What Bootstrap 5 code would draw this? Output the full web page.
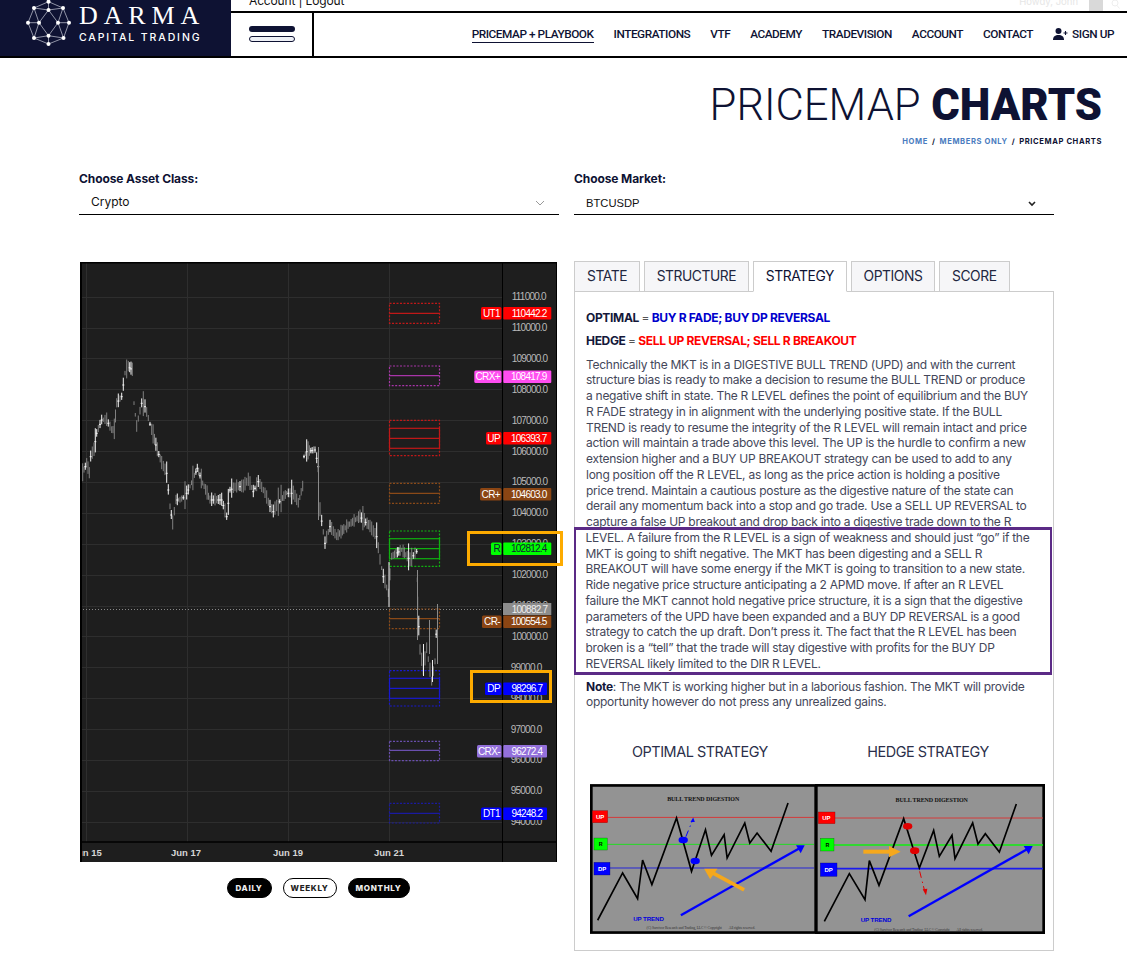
<!DOCTYPE html>
<html lang="en">
<head>
<meta charset="UTF-8">
<meta name="viewport" content="width=device-width, initial-scale=1.0">
<title>Pricemap Charts</title>
<link href="https://cdn.jsdelivr.net/npm/bootstrap@5.3.0/dist/css/bootstrap.min.css" rel="stylesheet">
<style>
body { font-family: Inter, "Liberation Sans", sans-serif; color: #0e1233; background: #fff; }

/* header */
.site-head { height: 58px; border-bottom: 2px solid #000; }
.logo-cell { width: 231px; background: #0e1233; color: #fff; overflow: hidden; padding-left: 25px; }
.logo-icon { margin: -6px 6px 0 0; }
.logo-word { font-family: "Liberation Serif", serif; font-size: 26px; line-height: 1; letter-spacing: 5.9px; margin-top: -10px; }
.logo-sub { font-size: 10.5px; line-height: 1; letter-spacing: 1.9px; margin-top: 4px; font-weight: 500; }
.head-top { height: 13px; border-bottom: 2px solid #000; overflow: hidden; padding: 0 7px 0 18px; }
.acct-link { font-size: 12px; line-height: 1; margin-top: -5px; color: #111; letter-spacing: -.15px; }
.howdy { font-size: 9.5px; line-height: 1; margin-top: -3px; color: #e6e6e6; }
.avatar-box { width: 14px; height: 12px; background: #d9d9d9; margin-left: 3px; }
.burger-cell { width: 83px; border-right: 2px solid #000; padding: 13px 0 0 18px; }
.burger-a { width: 46px; height: 6px; background: #0e1233; border-radius: 3px; }
.burger-b { width: 46px; height: 6px; background: #eef0f6; border: 1px solid #0e1233; border-radius: 3px; margin-top: 4px; }
.main-menu { gap: 20px; padding: 0 13px 2px 0; font-family: Roboto, "Liberation Sans", sans-serif; font-size: 11.8px; letter-spacing: -.45px; }
.main-menu .nav-link { padding: 0; color: #0e1233; font-weight: 500; line-height: 14px; }
.main-menu .nav-link.current { border-bottom: 1px solid #0e1233; padding-bottom: 1px; margin-top: 2px; }

/* title */
.page-head { padding: 23px 25px 0 0; text-align: right; }
.page-title { font-family: Roboto, sans-serif; font-size: 43.5px; line-height: 50px; font-weight: 300; margin: 0; color: #0e1233; }
.page-title b { font-weight: 900; }
.crumbs { font-size: 7.6px; font-weight: 700; letter-spacing: .6px; margin: 5px 0 0; line-height: 12px; --bs-breadcrumb-divider: "/"; --bs-breadcrumb-item-padding-x: 4px; --bs-breadcrumb-divider-color: #0e1233; --bs-breadcrumb-margin-bottom: 0; }
.crumbs a { color: #4a7cc0; text-decoration: none; }
.crumbs .active { color: #0e1233; }

/* pickers */
.page-body { padding: 0 73px 0 79px; width: 1127px; }
.pick-col { width: 480px; }
.pick-label { font-size: 12px; font-weight: 700; line-height: 16px; margin: 0 0 4px; display: block; letter-spacing: -.1px; }
.pick-select { border: 0; border-bottom: 1.5px solid #000; border-radius: 0; font-size: 12px; height: 24px; padding: 0 0 1px 12px; color: #111; background-position: right 14px center; background-size: 10px 8px; box-shadow: none; }
.pick-select.thin-arrow { background-image: url("data:image/svg+xml,%3csvg xmlns='http://www.w3.org/2000/svg' viewBox='0 0 10 8'%3e%3cpath fill='none' stroke='%23999' d='M1 2l4 4 4-4'/%3e%3c/svg%3e"); }
.pick-select.bold-arrow { font-family: "Liberation Sans", sans-serif; font-size: 11.2px; padding-top: 2px; padding-bottom: 0; background-position: right 17px center; background-image: url("data:image/svg+xml,%3csvg xmlns='http://www.w3.org/2000/svg' viewBox='0 0 10 8'%3e%3cpath fill='none' stroke='%23222' stroke-width='1.6' d='M2 3l3 3 3-3'/%3e%3c/svg%3e"); }

/* chart */
.chart-wrap { width: 477px; margin: 0 0 0 1px; position: relative; }
.chart-wrap svg { display: block; }
.hilite { position: absolute; border: 3.5px solid #fdab00; }
.hilite-r { left: 387px; top: 269px; width: 96px; height: 35px; }
.hilite-dp { left: 390px; top: 408px; width: 82px; height: 33px; }
.range-pills { gap: 11px; margin-top: 16px; padding-right: 2px; }
.range-btn { --bs-btn-padding-x: 0; --bs-btn-padding-y: 0; font-size: 8px; font-weight: 800; letter-spacing: .7px; height: 20px; line-height: 17px; border: 1px solid #000; background: #000; color: #eee; }
.range-btn:hover { background: #000; color: #eee; }
.range-btn.off { background: #fff; color: #222; }
.w-daily { width: 45px; } .w-weekly { width: 54px; } .w-monthly { width: 62px; }

/* tabs + strategy panel */
.info-col { margin-top: -1px; }
.info-tabs { --bs-nav-tabs-border-color: #ccc; --bs-nav-tabs-border-radius: 0; --bs-nav-tabs-link-active-border-color: #ccc #ccc #fff; --bs-nav-tabs-link-active-color: #0e1233; gap: 3.6px; font-size: 13.8px; line-height: 18px; letter-spacing: -.42px; }
.info-tabs .nav-link { padding: 5px 12px 6px; margin-bottom: -1px; color: #22263f; background: #f6f6f8; border-color: #ccc #ccc #ccc; }
.info-tabs .nav-link.active { background: #fff; border-bottom-color: #fff; }
.info-pane { border: 1px solid #ccc; border-top: 0; padding: 18px 11px 0; height: 659px; font-size: 12px; line-height: 15.75px; letter-spacing: -.27px; color: #44475a; white-space: nowrap; }
.plan-line { font-weight: 700; margin: 0 0 7.5px; color: #14183a; letter-spacing: -.33px; }
.plan-line span.eq { font-weight: 400; color: #555; }
.txt-buy { color: #0000cc; } .txt-sell { color: #ff0000; }
.plan-body { margin: 0; }
.plan-mark { margin: -3px -10px 0 -12px; padding: 0 10px 0 9.5px; border: 3px solid #5b2a86; border-left-width: 2.5px; border-right-width: 2.5px; }
.plan-note { margin: 4px 0 0; }
.plan-note b { color: #14183a; }
.strat-heads { font-size: 14.4px; line-height: 18px; letter-spacing: -.45px; color: #2b2f4a; margin: 33px 0 0; }
.strat-heads div { width: 228px; text-align: center; }
.strat-pics { margin: 23px 0 0 4px; }
.strat-pics svg { flex-shrink: 0; }
.pic-hedge { margin-left: -2px; }
.pic-tag { font-family: "Liberation Sans", sans-serif; font-weight: 700; }
</style>
</head>
<body>

<header class="site-head d-flex">
  <div class="logo-cell d-flex align-items-center">
    <svg width="48" height="50" viewBox="24 0 48 50" class="flex-shrink-0 logo-icon">
      <g stroke="#c9ccd8" stroke-width=".7" fill="none">
        <path d="M47.5 1.7L33 8 27 22.7 33 38 47.5 44 62.5 38 68 22.7 62 8Z"/>
        <path d="M47.5 1.7V10M33 8L47.5 10 62 8M33 8L38 22.7 47.5 10 57 22.7 62 8M27 22.7H38M57 22.7H68M38 22.7L47.5 35.7 57 22.7M38 22.7L33 38 47.5 35.7 62.5 38 57 22.7M47.5 35.7V44"/>
      </g>
      <g fill="#fff">
        <circle cx="47.5" cy="1.7" r="2"/><circle cx="33" cy="8" r="2"/><circle cx="62" cy="8" r="2"/><circle cx="47.5" cy="10" r="2"/>
        <circle cx="27" cy="22.7" r="2"/><circle cx="38" cy="22.7" r="2"/><circle cx="57" cy="22.7" r="2"/><circle cx="68" cy="22.7" r="2"/>
        <circle cx="47.5" cy="35.7" r="2"/><circle cx="33" cy="38" r="2"/><circle cx="62.5" cy="38" r="2"/><circle cx="47.5" cy="44" r="2"/>
      </g>
    </svg>
    <div>
      <div class="logo-word">DARMA</div>
      <div class="logo-sub">CAPITAL TRADING</div>
    </div>
  </div>
  <div class="flex-grow-1">
    <div class="head-top d-flex justify-content-between">
      <div class="acct-link">Account | Logout</div>
      <div class="d-flex gap-2">
        <div class="howdy">Howdy, John</div>
        <div class="avatar-box"></div>
        <svg width="9" height="10" viewBox="0 0 9 10"><circle cx="4" cy="3" r="3" fill="none" stroke="#eee"/><path d="M6 5.5l2.5 3" stroke="#eee"/></svg>
      </div>
    </div>
    <div class="d-flex" style="height:43px">
      <div class="burger-cell">
        <div class="burger-a"></div>
        <div class="burger-b"></div>
      </div>
      <ul class="nav main-menu flex-grow-1 justify-content-end align-items-center">
        <li class="nav-item"><a class="nav-link current" href="#">PRICEMAP + PLAYBOOK</a></li>
        <li class="nav-item"><a class="nav-link" href="#">INTEGRATIONS</a></li>
        <li class="nav-item"><a class="nav-link" href="#">VTF</a></li>
        <li class="nav-item"><a class="nav-link" href="#">ACADEMY</a></li>
        <li class="nav-item"><a class="nav-link" href="#">TRADEVISION</a></li>
        <li class="nav-item"><a class="nav-link" href="#">ACCOUNT</a></li>
        <li class="nav-item"><a class="nav-link" href="#">CONTACT</a></li>
        <li class="nav-item">
          <a class="nav-link d-flex align-items-center" href="#">
            <svg width="15" height="12" viewBox="0 0 15 12" class="me-1"><circle cx="5.5" cy="3" r="3" fill="#0e1233"/><path d="M0 12c0-3.6 2.2-5 5.5-5s5.5 1.4 5.5 5z" fill="#0e1233"/><path d="M12.5 3v4M10.5 5h4" stroke="#0e1233" stroke-width="1.1"/></svg>
            SIGN UP
          </a>
        </li>
      </ul>
    </div>
  </div>
</header>

<section class="page-head">
  <h1 class="page-title">PRICEMAP <b>CHARTS</b></h1>
  <ol class="breadcrumb crumbs justify-content-end">
    <li class="breadcrumb-item"><a href="#">HOME</a></li>
    <li class="breadcrumb-item"><a href="#">MEMBERS ONLY</a></li>
    <li class="breadcrumb-item active">PRICEMAP CHARTS</li>
  </ol>
</section>

<main class="page-body">
  <div class="d-flex justify-content-between" style="margin-top:23px">
    <div class="pick-col">
      <label class="pick-label" for="assetPick">Choose Asset Class:</label>
      <select id="assetPick" class="form-select pick-select thin-arrow"><option>Crypto</option></select>
    </div>
    <div class="pick-col">
      <label class="pick-label" for="marketPick">Choose Market:</label>
      <select id="marketPick" class="form-select pick-select bold-arrow"><option>BTCUSDP</option></select>
    </div>
  </div>

  <div class="d-flex justify-content-between" style="margin-top:47px">
    <div class="pick-col">
      <div class="chart-wrap">
        <svg id="chart" width="477" height="600" viewBox="0 0 477 600" font-family="Liberation Sans, sans-serif"></svg>
        <div class="hilite hilite-r"></div>
        <div class="hilite hilite-dp"></div>
      </div>
      <div class="d-flex justify-content-center range-pills">
        <button class="btn range-btn rounded-pill w-daily">DAILY</button>
        <button class="btn range-btn off rounded-pill w-weekly">WEEKLY</button>
        <button class="btn range-btn rounded-pill w-monthly">MONTHLY</button>
      </div>
    </div>

    <div class="pick-col info-col">
      <ul class="nav nav-tabs info-tabs">
        <li class="nav-item"><a class="nav-link" href="#">STATE</a></li>
        <li class="nav-item"><a class="nav-link" href="#">STRUCTURE</a></li>
        <li class="nav-item"><a class="nav-link active" href="#">STRATEGY</a></li>
        <li class="nav-item"><a class="nav-link" href="#">OPTIONS</a></li>
        <li class="nav-item"><a class="nav-link" href="#">SCORE</a></li>
      </ul>
      <div class="info-pane">
        <p class="plan-line">OPTIMAL <span class="eq">=</span> <span class="txt-buy">BUY R FADE; BUY DP REVERSAL</span></p>
        <p class="plan-line">HEDGE <span class="eq">=</span> <span class="txt-sell">SELL UP REVERSAL; SELL R BREAKOUT</span></p>
        <p class="plan-body">Technically the MKT is in a DIGESTIVE BULL TREND (UPD) and with the current<br>
        structure bias is ready to make a decision to resume the BULL TREND or produce<br>
        a negative shift in state. The R LEVEL defines the point of equilibrium and the BUY<br>
        R FADE strategy in in alignment with the underlying positive state. If the BULL<br>
        TREND is ready to resume the integrity of the R LEVEL will remain intact and price<br>
        action will maintain a trade above this level. The UP is the hurdle to confirm a new<br>
        extension higher and a BUY UP BREAKOUT strategy can be used to add to any<br>
        long position off the R LEVEL, as long as the price action is holding a positive<br>
        price trend. Maintain a cautious posture as the digestive nature of the state can<br>
        derail any momentum back into a stop and go trade. Use a SELL UP REVERSAL to<br>
        capture a false UP breakout and drop back into a digestive trade down to the R</p>
        <p class="plan-body plan-mark">LEVEL. A failure from the R LEVEL is a sign of weakness and should just “go” if the<br>
        MKT is going to shift negative. The MKT has been digesting and a SELL R<br>
        BREAKOUT will have some energy if the MKT is going to transition to a new state.<br>
        Ride negative price structure anticipating a 2 APMD move. If after an R LEVEL<br>
        failure the MKT cannot hold negative price structure, it is a sign that the digestive<br>
        parameters of the UPD have been expanded and a BUY DP REVERSAL is a good<br>
        strategy to catch the up draft. Don’t press it. The fact that the R LEVEL has been<br>
        broken is a “tell” that the trade will stay digestive with profits for the BUY DP<br>
        REVERSAL likely limited to the DIR R LEVEL.</p>
        <p class="plan-note"><b>Note</b>: The MKT is working higher but in a laborious fashion. The MKT will provide<br>
        opportunity however do not press any unrealized gains.</p>

        <div class="d-flex strat-heads">
          <div>OPTIMAL STRATEGY</div>
          <div>HEDGE STRATEGY</div>
        </div>
        <div class="d-flex strat-pics">
          <svg width="227" height="150" viewBox="45 148 682 450" font-family="Liberation Serif, serif">
            <rect x="49" y="152" width="674" height="442" fill="#939393" stroke="#000" stroke-width="8"/>
            <path d="M98 248H718" stroke="#d43a3a" stroke-width="3"/>
            <path d="M97 329H718" stroke="#22dd22" stroke-width="3"/>
            <path d="M105 400H718" stroke="#2525d8" stroke-width="3"/>
            <rect x="52" y="228" width="46" height="36" fill="#f00" stroke="#700"/>
            <rect x="57" y="310" width="40" height="36" fill="#0f0" stroke="#060"/>
            <rect x="57" y="383" width="48" height="38" fill="#00f" stroke="#006"/>
            <text x="75" y="254" text-anchor="middle" font-size="18" class="pic-tag" fill="#fff">UP</text>
            <text x="77" y="335" text-anchor="middle" font-size="16" class="pic-tag" fill="#000">R</text>
            <text x="81" y="409" text-anchor="middle" font-size="18" class="pic-tag" fill="#fff">DP</text>
            <path d="M68 557L143 415 188 492 203 376 231 450 305 250 350 410 392 285 410 362 448 300 457 370 510 265 525 325 547 295 589 350 640 205" fill="none" stroke="#000" stroke-width="5"/>
            <path d="M318 542L672 342" stroke="#0000ff" stroke-width="7"/>
            <path d="M690 332L664 332 678 356Z" fill="#0000ff"/>
            <path d="M508 466L412 414" stroke="#f5a81c" stroke-width="11"/>
            <path d="M388 402L428 402 406 434Z" fill="#f5a81c"/>
            <ellipse cx="325" cy="316" rx="14" ry="10" fill="#0000ff"/>
            <ellipse cx="361" cy="379" rx="14" ry="10" fill="#0000ff"/>
            <path d="M333 306L351 262" stroke="#0000ff" stroke-width="3" stroke-dasharray="20 12 4 10"/>
            <path d="M355 248L347 262 360 262Z" fill="#0000ff"/>
            <text x="385" y="199" text-anchor="middle" font-size="18" font-weight="700" fill="#111">BULL TREND DIGESTION</text>
            <text x="175" y="558" font-size="18.5" class="pic-tag" fill="#0000dd">UP TREND</text>
            <text x="215" y="584" font-size="11" fill="#333">(C) Survivor Research and Trading, LLC © Copyright &#160;&#160;&#160;&#160;&#160;&#160;&#160; All rights reserved.</text>
          </svg>
          <svg width="230" height="150" viewBox="0 148 690 450" font-family="Liberation Serif, serif" class="pic-hedge">
            <rect x="4" y="152" width="682" height="442" fill="#939393" stroke="#000" stroke-width="8"/>
            <path d="M60 250H684" stroke="#d43a3a" stroke-width="3"/>
            <path d="M57 331H684" stroke="#11ee11" stroke-width="4"/>
            <path d="M66 402H684" stroke="#1a1aee" stroke-width="5"/>
            <rect x="10" y="232" width="50" height="35" fill="#f00" stroke="#700"/>
            <rect x="17" y="311" width="40" height="38" fill="#0f0" stroke="#060"/>
            <rect x="16" y="385" width="50" height="40" fill="#00f" stroke="#006"/>
            <text x="34" y="256" text-anchor="middle" font-size="18" class="pic-tag" fill="#fff">UP</text>
            <text x="37" y="337" text-anchor="middle" font-size="16" class="pic-tag" fill="#000">R</text>
            <text x="41" y="411" text-anchor="middle" font-size="18" class="pic-tag" fill="#fff">DP</text>
            <path d="M28 560L103 417 150 495 163 378 192 452 266 252 313 400 356 287 373 365 411 302 420 372 473 265 489 328 511 297 553 352 604 208" fill="none" stroke="#000" stroke-width="5"/>
            <path d="M281 545L636 344" stroke="#0000ff" stroke-width="7"/>
            <path d="M653 334L626 334 641 359Z" fill="#0000ff"/>
            <path d="M145 351H225" stroke="#f5a81c" stroke-width="12"/>
            <path d="M257 351L222 334V368Z" fill="#f5a81c"/>
            <ellipse cx="278" cy="275" rx="14" ry="10" fill="#e00000"/>
            <ellipse cx="299" cy="348" rx="14" ry="10" fill="#e00000"/>
            <path d="M314 410L328 465" stroke="#e00000" stroke-width="3" stroke-dasharray="20 12 4 10"/>
            <path d="M333 482L323 464 337 462Z" fill="#e00000"/>
            <text x="350" y="201" text-anchor="middle" font-size="18" font-weight="700" fill="#111">BULL TREND DIGESTION</text>
            <text x="137" y="561" font-size="18.5" class="pic-tag" fill="#0000dd">UP TREND</text>
            <text x="178" y="588" font-size="11" fill="#333">(C) Survivor Research and Trading, LLC © Copyright &#160;&#160;&#160;&#160;&#160;&#160;&#160; All rights reserved.</text>
          </svg>
        </div>
      </div>
    </div>
  </div>
</main>

<script src="https://cdn.jsdelivr.net/npm/bootstrap@5.3.0/dist/js/bootstrap.bundle.min.js"></script>
<script>
// draws the price chart into #chart
const NS = 'http://www.w3.org/2000/svg';
const chart = document.getElementById('chart');
function el(name, attrs, text) {
  const n = document.createElementNS(NS, name);
  for (const k in attrs) n.setAttribute(k, attrs[k]);
  if (text) n.textContent = text;
  chart.appendChild(n);
  return n;
}

el('rect', {x: 0, y: 0, width: 477, height: 600, fill: '#1e1e1e'});

// grid
for (let i = 0; i < 18; i++) {
  const y = Math.round(34.7 + i * 30.88) + .5;
  el('path', {d: `M0 ${y}H423`, stroke: '#2e2e2e'});
}
[6.5, 107.5, 208.5, 309.5].forEach(x => el('path', {d: `M${x} 0V580`, stroke: '#2e2e2e'}));

// last price line
el('path', {d: 'M0 347.5H423', stroke: '#888', 'stroke-dasharray': '1 2'});

// levels: name, top, bottom, line, inner top, inner bottom, box colour, tag colour, tag left, value right, price, label colour, label y
const levels = [
  ['UT1', 41.3, 61.3, 51.3, null, null, '#c01818', '#ff0000', 401, 471.3, '110442.2', '#fff', 51.3],
  ['CRX+', 104, 123.7, 113.7, null, null, '#a835a8', '#ff4df0', 394.3, 471.3, '108417.9', '#fff', 114.7],
  ['UP', 158.3, 193.7, 176.3, 166.3, 186.3, '#c01818', '#ff0000', 406, 471.3, '106393.7', '#fff', 176.3],
  ['CR+', 221.3, 241.3, 231.3, null, null, '#8a4a18', '#8b4513', 400, 471.3, '104603.0', '#fff', 232.3],
  ['R', 269, 304.3, 286.7, 276.7, 296.7, '#10b010', '#00ff00', 411, 471.3, '102812.4', '#123', 286.7],
  ['CR-', 347, 366.7, 356.7, null, null, '#8a4a18', '#8b4513', 402, 471.3, '100554.5', '#fff', 359.7],
  ['DP', 408.7, 444, 426.3, 416.3, 436.3, '#1818d0', '#0000ff', 405, 467, '98296.7', '#fff', 426.7],
  ['CRX-', 479.3, 498.7, 488.3, null, null, '#6a4fae', '#9370db', 397, 467, '96272.4', '#fff', 489.3],
  ['DT1', 541.3, 561, 551.3, null, null, '#1a1aa0', '#0000ff', 401, 467, '94248.2', '#fff', 551.7]
];
levels.forEach(l => {
  const [, top, bot, line, inTop, inBot, col] = l;
  el('rect', {x: 309.5, y: top, width: 50, height: bot - top, fill: 'none', stroke: col, 'stroke-width': 1.2, 'stroke-dasharray': '2 1.5'});
  el('path', {d: `M309.5 ${line}H359.5`, stroke: col, 'stroke-width': 1.2});
  if (inTop !== null) el('rect', {x: 309.5, y: inTop, width: 50, height: inBot - inTop, fill: 'none', stroke: col, 'stroke-width': 1.2});
});

// price path, zoom coordinates of the reference
const pathA = [[8,640],[20,610],[28,640],[32,590],[42,570],[50,520],[65,480],[80,480],[95,510],[103,510],[110,430],[125,410],[135,340],[145,320],[157,330],[162,430],[170,500],[185,430],[195,440],[215,510],[232,570],[245,610],[260,640],[270,740],[278,790],[288,720],[300,720],[315,710],[330,680],[352,625],[368,670],[390,720],[410,720],[425,720],[440,770],[450,690],[470,680],[490,680],[505,660],[520,695],[535,665],[555,700],[570,740],[580,755],[595,730],[620,700],[640,700],[655,730],[668,680],[672,590],[680,575],[705,570],[715,620]];
const pathB = [[0,750],[15,850],[30,800],[50,830],[80,800],[120,770],[150,800],[170,830],[180,900],[190,950],[205,1000],[215,890],[245,870],[270,900],[290,875],[292,960]];
const pathC = [[293,100],[300,240],[310,300],[320,235],[335,335],[345,275],[352,110]];
const pts = [
  ...pathA.map(p => [p[0] / 3, p[1] / 3 - 2]),
  ...pathB.map(p => [240 + p[0] / 3, p[1] / 3 - 2]),
  ...pathC.map(p => [240 + p[0] / 3, p[1] / 3 + 308])
];
let seed = 7;
function rnd() { seed = (seed * 16807) % 2147483647; return seed / 2147483647; }
let grey = '', white = '';
for (let i = 0; i < pts.length - 1; i++) {
  const [x0, y0] = pts[i], [x1, y1] = pts[i + 1];
  const steps = Math.max(1, Math.round((x1 - x0) / 1.5));
  for (let s = 0; s < steps; s++) {
    const x = (x0 + (x1 - x0) * s / steps).toFixed(1);
    const y = y0 + (y1 - y0) * s / steps;
    const h = 2 + rnd() * 6 + (rnd() > .9 ? 8 : 0);
    const seg = `M${x} ${(y - h).toFixed(1)}V${(y + h * .8).toFixed(1)}`;
    if (rnd() > .7) white += `${seg}M${x - 1} ${y.toFixed(1)}h2`;
    else grey += seg;
  }
}
el('path', {d: grey, stroke: '#808080', fill: 'none'});
el('path', {d: white, stroke: '#f4f4f4', fill: 'none'});
// long wicks on the drops
el('path', {d: 'M238.5 185V258M337.5 308V378M349.5 358V392M357.5 342V402', stroke: '#8a8a8a', fill: 'none'});
el('path', {d: 'M352.5 398V420M343.5 382V414M309 300V345', stroke: '#eee', fill: 'none'});

// price scale
for (let i = 0; i < 18; i++) {
  const v = 111000 - i * 1000;
  el('text', {x: v >= 100000 ? 431.7 : 430.7, y: 34.7 + i * 30.88 + 3.5, 'font-size': 10, fill: '#b9b9b9', 'letter-spacing': '-.75'}, v.toFixed(1));
}
el('path', {d: 'M0 580H477', stroke: '#000', 'stroke-width': 1.5});
el('path', {d: 'M422.5 0V600', stroke: '#000'});
el('rect', {x: 476, y: 0, width: 1, height: 600, fill: '#000'});
el('rect', {x: 0, y: 0, width: 477, height: 1.5, fill: '#000'});

// last price tag
el('rect', {x: 423, y: 341, width: 48.3, height: 12, fill: '#8c8c8c'});
el('text', {x: 431.7, y: 350.5, 'font-size': 10, fill: '#eee', 'letter-spacing': '-.75'}, '100882.7');

// level tags
levels.forEach(l => {
  const [name, , , , , , , tag, left, right, price, txt, cy] = l;
  el('rect', {x: left, y: cy - 6.3, width: 421.5 - left, height: 12.6, rx: 1.5, fill: tag});
  el('rect', {x: 423.3, y: cy - 6.3, width: right - 423.3, height: 12.6, rx: 1, fill: tag});
  el('text', {x: 420, y: cy + 3.5, 'font-size': 10, 'text-anchor': 'end', fill: txt, 'letter-spacing': '-.6'}, name);
  el('text', {x: right - 4.6, y: cy + 3.5, 'font-size': 10, 'text-anchor': 'end', fill: txt, 'letter-spacing': '-.75'}, price);
});

// dates
[['Jun 15', 6.7], ['Jun 17', 106], ['Jun 19', 208], ['Jun 21', 309]].forEach(d => {
  el('text', {x: d[1], y: 594, 'font-size': 9.5, 'font-weight': 700, 'text-anchor': 'middle', fill: '#d5d5d5'}, d[0]);
});
el('rect', {x: 0, y: 0, width: 2, height: 600, fill: '#000'});
</script>
</body>
</html>
